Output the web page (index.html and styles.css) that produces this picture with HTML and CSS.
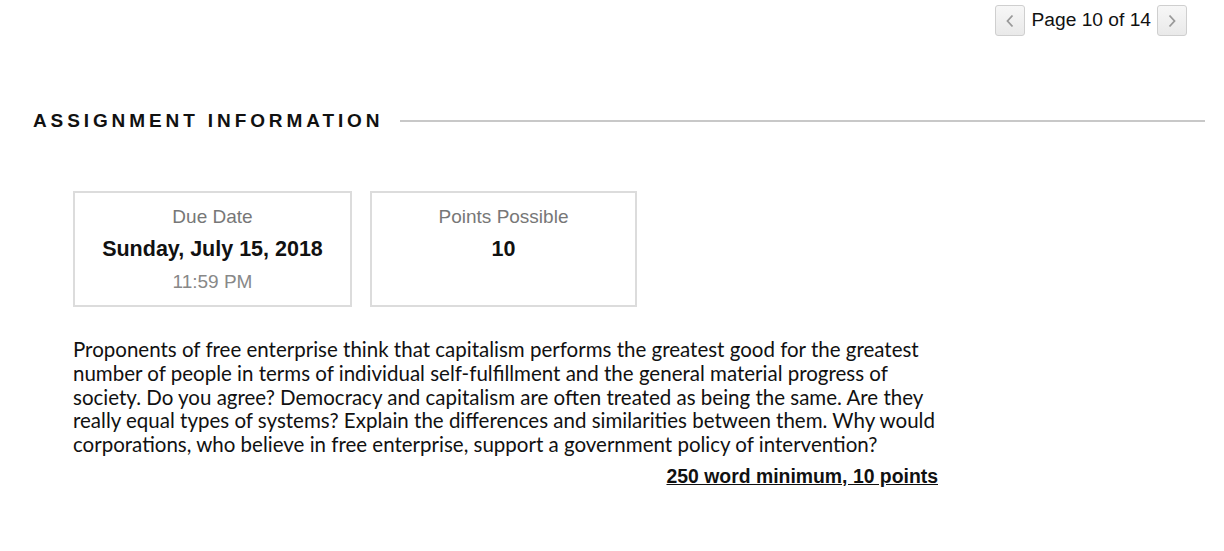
FILE: index.html
```html
<!DOCTYPE html>
<html>
<head>
<meta charset="utf-8">
<link rel="stylesheet" href="styles.css">
</head>
<body>
<div class="page">
  <div class="pager">
    <button class="pbtn" aria-label="Previous"><svg width="10" height="16" viewBox="0 0 10 16"><path d="M7.5 2.5 L2.5 8 L7.5 13.5" fill="none" stroke="#999" stroke-width="1.8"/></svg></button>
    <span class="ptext">Page 10 of 14</span>
    <button class="pbtn" aria-label="Next"><svg width="10" height="16" viewBox="0 0 10 16"><path d="M2.5 2.5 L7.5 8 L2.5 13.5" fill="none" stroke="#999" stroke-width="1.8"/></svg></button>
  </div>
  <div class="section-head">
    <h2 class="section-title">ASSIGNMENT INFORMATION</h2>
    <div class="rule"></div>
  </div>
  <div class="cards">
    <div class="card card-due">
      <div class="label">Due Date</div>
      <div class="value">Sunday, July 15, 2018</div>
      <div class="sub">11:59 PM</div>
    </div>
    <div class="card card-points">
      <div class="label">Points Possible</div>
      <div class="value">10</div>
    </div>
  </div>
  <div class="instructions">
    <p class="body">Proponents of free enterprise think that capitalism performs the greatest good for the greatest<br>number of people in terms of individual self-fulfillment and the general material progress of<br>society. Do you agree? Democracy and capitalism are often treated as being the same. Are they<br>really equal types of systems? Explain the differences and similarities between them. Why would<br>corporations, who believe in free enterprise, support a government policy of intervention?</p>
    <p class="req">250 word minimum, 10 points</p>
  </div>
</div>
</body>
</html>
```
FILE: styles.css
```css
html, body {
  margin: 0;
  padding: 0;
  background: #fff;
}
body {
  font-family: "Liberation Sans", Arial, sans-serif;
  color: #111;
}
.page {
  width: 1224px;
  height: 551px;
  overflow: hidden;
}
.pager {
  display: flex;
  justify-content: flex-end;
  align-items: center;
  padding: 5px 37px 0 0;
  height: 31px;
}
.pbtn {
  width: 30px;
  height: 31px;
  box-sizing: border-box;
  border: 1px solid #cfcfcf;
  border-radius: 3px;
  background: linear-gradient(#f7f7f7, #e9e9e9);
  display: flex;
  align-items: center;
  justify-content: center;
  padding: 0;
}
.ptext {
  font-size: 19.2px;
  color: #111;
  margin: 0 6px 0 7px;
  line-height: 31px;
  position: relative;
  top: -1px;
}
.section-head {
  display: flex;
  align-items: center;
  margin: 73px 19px 0 33px;
}
.section-title {
  margin: 0;
  font-size: 19px;
  font-weight: bold;
  letter-spacing: 3.9px;
  color: #111;
  white-space: nowrap;
  line-height: 24px;
}
.rule {
  flex: 1;
  height: 2px;
  background: #c8c8c8;
  margin-left: 17px;
}
.cards {
  display: flex;
  gap: 18px;
  margin: 58px 0 0 73px;
}
.card {
  box-sizing: border-box;
  height: 116px;
  border: 2px solid #dcdcdc;
  text-align: center;
  padding-top: 12px;
}
.card-due { width: 279px; }
.card-points { width: 267px; }
.label {
  font-size: 19px;
  color: #777;
  line-height: 24px;
}
.value {
  font-size: 21.5px;
  font-weight: bold;
  color: #111;
  line-height: 26px;
  margin-top: 7px;
}
.sub {
  font-size: 19px;
  color: #888;
  line-height: 24px;
  margin-top: 8px;
}
.instructions {
  width: 865px;
  margin: 31px 0 0 73px;
}
.body {
  margin: 0;
  font-family: Lato, "Open Sans", sans-serif;
  font-size: 20.5px;
  line-height: 23.8px;
  color: #111;
  white-space: nowrap;
}
.req {
  margin: 8px 0 0 0;
  text-align: right;
  font-size: 19.4px;
  font-weight: bold;
  text-decoration: underline;
  color: #111;
}
```
